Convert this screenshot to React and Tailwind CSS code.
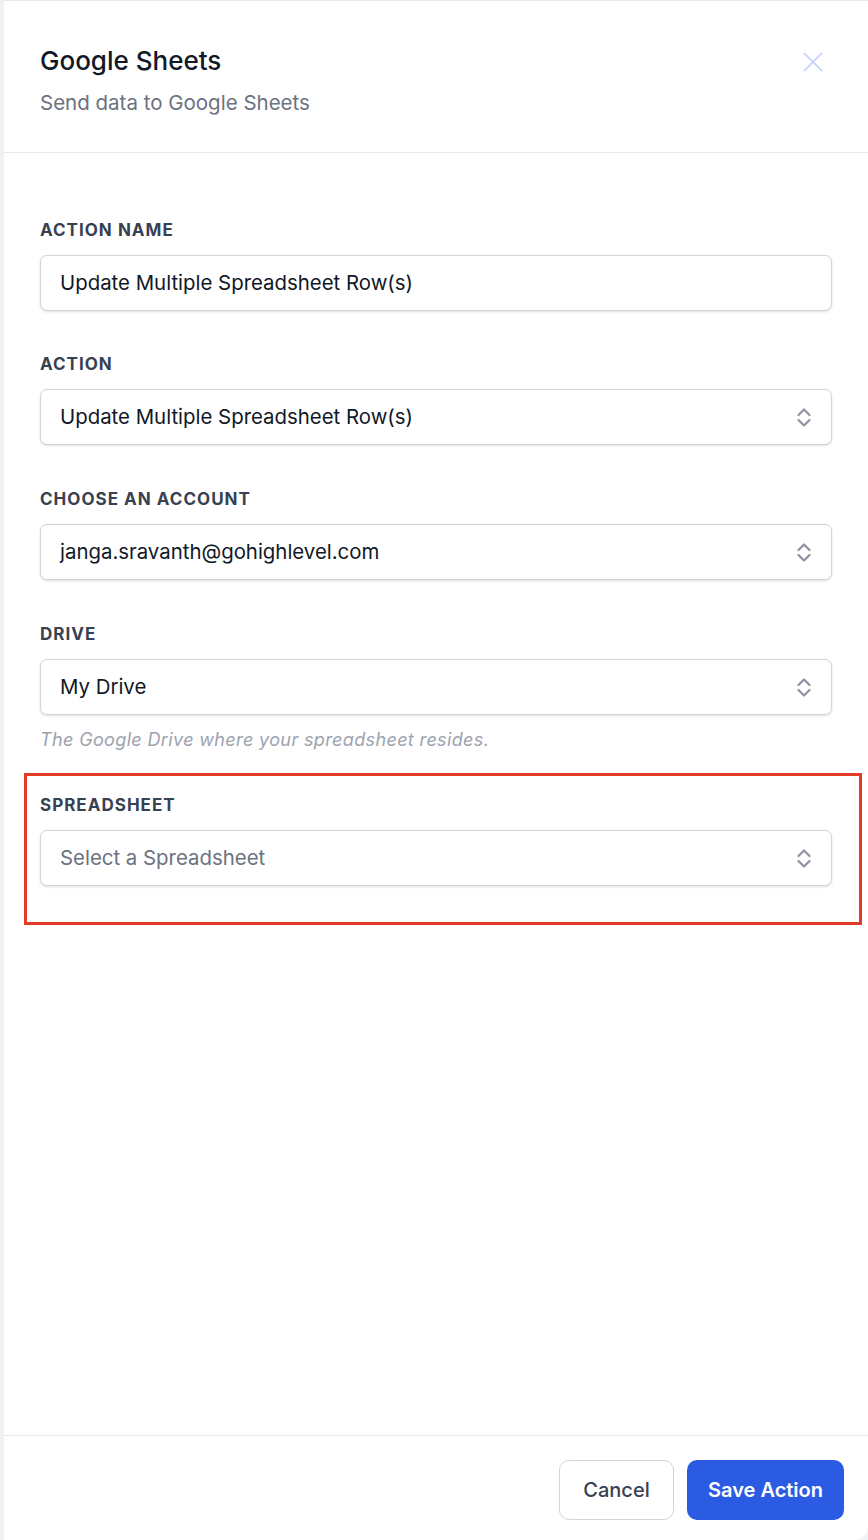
import React from "react";

function UpDownIcon() {
  return (
    <svg className="h-[21px] w-[14px] text-[#8e93a3]" viewBox="0 0 14 21" fill="none" stroke="currentColor" strokeWidth={2.2} strokeLinecap="round" strokeLinejoin="round">
      <path d="M1.5 8L7 2.5 12.5 8" />
      <path d="M12.5 13L7 18.5 1.5 13" />
    </svg>
  );
}

function Field({ label, value, placeholder, select, help, className = "" }) {
  return (
    <div className={className}>
      <label className="block text-[17px] leading-[24px] font-bold uppercase tracking-[0.06em] text-[#374151] mb-[13px]">
        {label}
      </label>
      <div className="flex items-center h-[56px] rounded-[7px] border border-[#d1d5db] bg-white shadow-sm pl-[19px] pr-[20px]">
        <span className={`flex-1 text-[20.4px] ${placeholder ? "text-[#6b7280]" : "text-[#111827]"}`}>
          {value || placeholder}
        </span>
        {select && <UpDownIcon />}
      </div>
      {help && (
        <p className="mt-[13px] text-[18px] leading-[24px] italic tracking-[0.02em] text-[#9ca3af]">{help}</p>
      )}
    </div>
  );
}

export default function App() {
  return (
    <div className="flex h-[1540px] w-full bg-[#f1f2f4] font-['Inter',sans-serif]">
      <div className="w-[4px] shrink-0" />
      <div className="flex flex-col flex-1 bg-white border-t border-[#e5e7eb] rounded-br-[14px]">
        {/* header */}
        <div className="flex justify-between items-start pl-[36px] pr-[42px] pt-[44px] pb-[35px] border-b border-[#e5e7eb]">
          <div>
            <h2 className="text-[26px] leading-[32px] font-medium text-[#111827]">Google Sheets</h2>
            <p className="mt-[12px] text-[20.5px] leading-[28px] text-[#6b7280]">Send data to Google Sheets</p>
          </div>
          <button className="mt-[4px] text-[#c7d2fe]">
            <svg className="h-[26px] w-[26px]" viewBox="0 0 24 24" fill="none" stroke="currentColor" strokeWidth={1.6} strokeLinecap="round">
              <path d="M4 4l16 16M20 4L4 20" />
            </svg>
          </button>
        </div>

        {/* body */}
        <div className="flex-1 pl-[36px] pr-[36px] pt-[65px]">
          <Field label="Action Name" value="Update Multiple Spreadsheet Row(s)" />
          <Field className="mt-[41px]" label="Action" value="Update Multiple Spreadsheet Row(s)" select />
          <Field className="mt-[42px]" label="Choose an account" value="janga.sravanth@gohighlevel.com" select />
          <Field
            className="mt-[42px]"
            label="Drive"
            value="My Drive"
            select
            help="The Google Drive where your spreadsheet resides."
          />
          <div className="mt-[21px] ml-[-16px] mr-[-30px] border-[3px] border-[#e33b26] pl-[13px] pr-[27px] pt-[17px] pb-[36px]">
            <Field label="Spreadsheet" placeholder="Select a Spreadsheet" select />
          </div>
        </div>

        {/* footer */}
        <div className="flex justify-end gap-[13px] border-t border-[#e5e7eb] pt-[24px] pb-[20px] pr-[24px]">
          <button className="h-[60px] w-[115px] rounded-[10px] border border-[#d1d5db] bg-white text-[20px] font-medium text-[#374151]">
            Cancel
          </button>
          <button className="h-[60px] w-[157px] rounded-[10px] bg-[#2b5be3] text-[20px] font-semibold text-white">
            Save Action
          </button>
        </div>
      </div>
    </div>
  );
}
